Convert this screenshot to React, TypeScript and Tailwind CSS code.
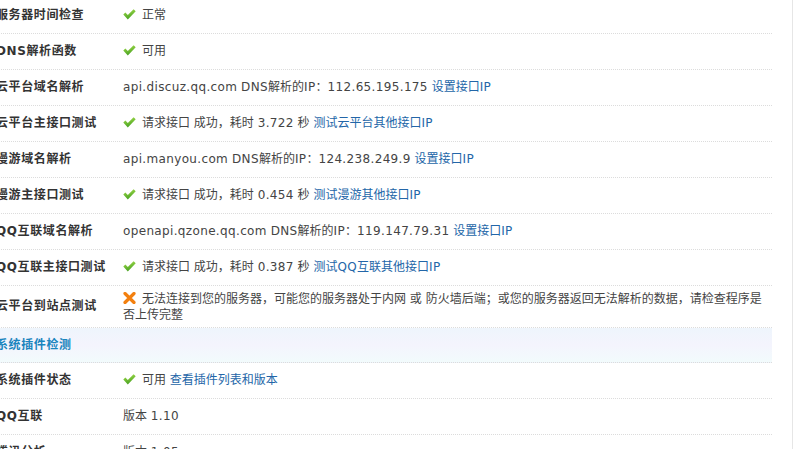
import React from "react";

type Part = string | { link: string };

type Row = {
  label: string;
  icon?: "ok" | "err";
  parts: Part[];
  tall?: boolean;
};

const rows: Row[] = [
  { label: "服务器时间检查", icon: "ok", parts: ["正常"] },
  { label: "DNS解析函数", icon: "ok", parts: ["可用"] },
  {
    label: "云平台域名解析",
    parts: ["api.discuz.qq.com DNS解析的IP：112.65.195.175 ", { link: "设置接口IP" }],
  },
  {
    label: "云平台主接口测试",
    icon: "ok",
    parts: ["请求接口 成功，耗时 3.722 秒 ", { link: "测试云平台其他接口IP" }],
  },
  {
    label: "漫游域名解析",
    parts: ["api.manyou.com DNS解析的IP：124.238.249.9 ", { link: "设置接口IP" }],
  },
  {
    label: "漫游主接口测试",
    icon: "ok",
    parts: ["请求接口 成功，耗时 0.454 秒 ", { link: "测试漫游其他接口IP" }],
  },
  {
    label: "QQ互联域名解析",
    parts: ["openapi.qzone.qq.com DNS解析的IP：119.147.79.31 ", { link: "设置接口IP" }],
  },
  {
    label: "QQ互联主接口测试",
    icon: "ok",
    parts: ["请求接口 成功，耗时 0.387 秒 ", { link: "测试QQ互联其他接口IP" }],
  },
  {
    label: "云平台到站点测试",
    icon: "err",
    tall: true,
    parts: [
      "无法连接到您的服务器，可能您的服务器处于内网 或 防火墙后端；或您的服务器返回无法解析的数据，请检查程序是否上传完整",
    ],
  },
];

const plugins: Row[] = [
  { label: "系统插件状态", icon: "ok", parts: ["可用 ", { link: "查看插件列表和版本" }] },
  { label: "QQ互联", parts: ["版本 1.10"] },
  { label: "腾讯分析", parts: ["版本 1.05"] },
];

// latin runs are a bit wider in the original (verdana), so space them out
function Txt({ s }: { s: string }) {
  return (
    <>
      {s.split(/([\x21-\x7e]+)/).map((seg, i) =>
        /^[\x21-\x7e]+$/.test(seg) ? (
          <span key={i} className="tracking-[0.35px]">
            {seg}
          </span>
        ) : (
          <span key={i}>{seg}</span>
        )
      )}
    </>
  );
}

function OkIcon() {
  return (
    <svg width="13" height="11" viewBox="0 0 13 11" className="inline-block align-[-1px] mr-[6px]">
      <defs>
        <linearGradient id="okg" x1="0" y1="0" x2="0.3" y2="1">
          <stop offset="0" stopColor="#a8e04c" />
          <stop offset="1" stopColor="#4aa323" />
        </linearGradient>
      </defs>
      <path d="M0.3 5.6 L2.4 3.6 L4.8 5.9 L10.6 0.2 L12.7 2.3 L4.8 10.4 Z" fill="url(#okg)" />
    </svg>
  );
}

function ErrIcon() {
  return (
    <svg width="13" height="12" viewBox="0 0 13 12" className="inline-block align-[-1px] mr-[6px]">
      <path d="M2 1.5 L11 10.5 M11 1.5 L2 10.5" stroke="#f3800f" strokeWidth="3.2" strokeLinecap="round" />
    </svg>
  );
}

function Line({ row }: { row: Row }) {
  return (
    <div className="flex border-b border-dotted border-[#dcdcdc]">
      <div
        className={`w-[127px] shrink-0 font-bold text-[#333] tracking-[0.6px] flex items-center ${
          row.tall ? "py-[4px]" : "py-[9px]"
        }`}
      >
        {row.label}
      </div>
      <div
        className={`flex-1 pr-[6px] text-[#444] ${
          row.tall ? "pt-[5px] pb-[4px] leading-[16px]" : "py-[9px] leading-[17px]"
        }`}
      >
        {row.icon === "ok" && <OkIcon />}
        {row.icon === "err" && <ErrIcon />}
        {row.parts.map((p, i) =>
          typeof p === "string" ? (
            <Txt key={i} s={p} />
          ) : (
            <a key={i} className="text-[#2366a8] cursor-pointer">
              <Txt s={p.link} />
            </a>
          )
        )}
      </div>
    </div>
  );
}

export default function App() {
  return (
    <div
      className="w-[793px] h-[449px] overflow-hidden bg-white flex border-r border-[#e6e6e6] text-[12px] leading-[17px]"
      style={{ fontFamily: '"DejaVu Sans", "Noto Sans CJK SC", sans-serif' }}
    >
      <div className="w-[776px] shrink-0 -ml-[4px] -mt-[2px]">
        {rows.map((r) => (
          <Line key={r.label} row={r} />
        ))}
        <div className="flex items-center h-[35px] border-b border-dotted border-[#dcdcdc] bg-gradient-to-b from-[#eef5fc] via-[#f4f4fd] to-[#f2fbfc]">
          <span className="font-bold text-[#1a85be] tracking-[0.6px]">系统插件检测</span>
        </div>
        {plugins.map((r) => (
          <Line key={r.label} row={r} />
        ))}
      </div>
    </div>
  );
}
